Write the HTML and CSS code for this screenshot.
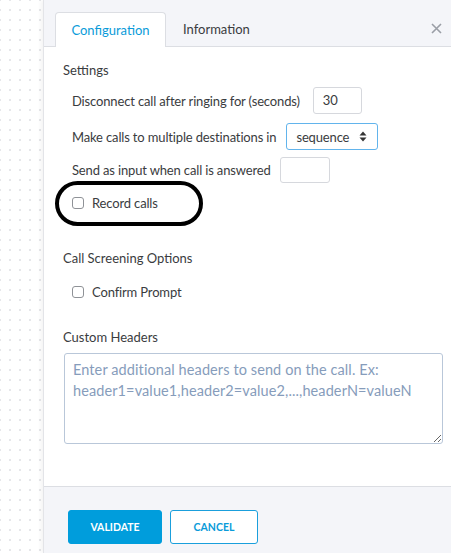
FILE: index.html
```html
<!DOCTYPE html>
<html lang="en">

<head>
    <meta charset="UTF-8">
    <meta name="viewport" content="width=device-width, initial-scale=1.0">
    <title>Call settings</title>
    <link rel="stylesheet" href="styles.css">
</head>

<body>
    <div class="page">
        <div class="gutter"></div>
        <div class="panel">
            <div class="tabs">
                <a class="tab active" href="javascript:;">Configuration</a>
                <a class="tab" href="javascript:;">Information</a>
                <a class="close" href="javascript:;">
                    <svg width="11" height="11" viewBox="0 0 11 11"><path d="M1 1L10 10M10 1L1 10" stroke="#9a9ea6" stroke-width="1.6"/></svg>
                </a>
            </div>

            <div class="content">
                <div class="heading first">Settings</div>
                <div class="row r1">
                    <span>Disconnect call after ringing for (seconds)</span>
                    <span class="field w49">30</span>
                </div>
                <div class="row r2">
                    <span>Make calls to multiple destinations in</span>
                    <span class="select">sequence
                        <svg width="8" height="11" viewBox="0 0 8 11"><path d="M4 0.5L7.5 4.5H0.5Z M4 10.5L7.5 6.5H0.5Z" fill="#333"/></svg>
                    </span>
                </div>
                <div class="row r3">
                    <span>Send as input when call is answered</span>
                    <span class="field w50"></span>
                </div>
                <div class="row check r4">
                    <span class="box"></span>
                    <span>Record calls</span>
                    <!-- 标注圈 -->
                    <span class="ring"></span>
                </div>

                <div class="heading h2">Call Screening Options</div>
                <div class="row check r5">
                    <span class="box"></span>
                    <span>Confirm Prompt</span>
                </div>

                <div class="heading h3">Custom Headers</div>
                <textarea class="headers" placeholder="Enter additional headers to send on the call. Ex: header1=value1,header2=value2,...,headerN=valueN"></textarea>
            </div>

            <div class="footer">
                <button class="btn primary">VALIDATE</button>
                <button class="btn ghost">CANCEL</button>
            </div>
        </div>
    </div>
</body>

</html>
```

FILE: styles.css
```css
* {
    margin: 0;
    padding: 0;
    box-sizing: border-box;
}

body {
    font-family: Lato, "Open Sans", sans-serif;
    font-size: 13px;
    color: #3a3c40;
    background-color: #ffffff;
    background-image: radial-gradient(#e6e7ea 1px, transparent 1.2px);
    background-size: 10px 10px;
    background-position: 5px 5px;
}

a {
    text-decoration: none;
}

.page {
    display: flex;
    height: 553px;
}

.gutter {
    width: 43px;
    flex-shrink: 0;
}

.panel {
    flex: 1;
    display: flex;
    flex-direction: column;
    background-color: #ffffff;
    border-left: 1px solid #e3e4e8;
    box-shadow: -2px 0 4px rgba(0, 0, 0, .05);
}

.tabs {
    position: relative;
    display: flex;
    align-items: flex-end;
    height: 47px;
    padding-left: 11px;
    background-color: #f4f5f9;
    border-bottom: 1px solid #dcdee3;
}

.tab {
    display: block;
    height: 35px;
    line-height: 34px;
    margin-bottom: -1px;
    font-size: 13px;
    color: #3a3c40;
}

.tab.active {
    width: 111px;
    text-align: center;
    color: #0a9bd9;
    background-color: #ffffff;
    border: 1px solid #dcdee3;
    border-bottom: none;
    border-radius: 4px 4px 0 0;
}

.tab + .tab {
    padding-left: 17px;
}

.close {
    margin-left: auto;
    margin-right: 9px;
    align-self: center;
    margin-top: 10px;
    display: flex;
}

.content {
    flex: 1;
    padding-left: 19px;
    padding-right: 7px;
}

.heading {
    height: 20px;
    line-height: 20px;
}

.heading.first {
    margin-top: 13px;
}

.heading.h2 {
    margin-top: 35px;
}

.heading.h3 {
    margin-top: 25px;
}

.row {
    display: flex;
    align-items: center;
    padding-left: 9px;
    gap: 9px;
    letter-spacing: -0.15px;
}

.r1 {
    margin-top: 7px;
}

.r2 {
    margin-top: 9px;
}

.r3 {
    margin-top: 7px;
}

.r4 {
    position: relative;
    margin-top: 10px;
    height: 20px;
}

.r5 {
    margin-top: 14px;
    height: 20px;
}

.field {
    display: block;
    height: 27px;
    line-height: 25px;
    padding-left: 9px;
    border: 1px solid #d6d8dd;
    border-radius: 3px;
}

.w49 {
    width: 49px;
    margin-left: 4px;
}

.w50 {
    width: 50px;
    height: 26px;
}

.select {
    display: flex;
    align-items: center;
    justify-content: space-between;
    width: 92px;
    height: 27px;
    padding: 0 10px 0 9px;
    margin-left: 1px;
    border: 1px solid #62b4ec;
    border-radius: 3px;
}

.check {
    gap: 8px;
}

.box {
    display: block;
    width: 12px;
    height: 12px;
    border: 1px solid #8f9297;
    border-radius: 3px;
}

.ring {
    position: absolute;
    left: -8px;
    top: -12px;
    width: 148px;
    height: 45px;
    border: 4px solid #000000;
    border-radius: 23px;
}

.headers {
    display: block;
    width: 379px;
    height: 91px;
    margin-top: 6px;
    margin-left: 1px;
    padding: 5px 8px;
    font-family: Lato, "Open Sans", sans-serif;
    font-size: 14.5px;
    line-height: 21px;
    letter-spacing: 0.1px;
    border: 1px solid #b9c7d9;
    border-radius: 3px;
    outline: none;
    resize: both;
}

.headers::placeholder {
    color: #869cbb;
}

.footer {
    display: flex;
    align-items: center;
    gap: 8px;
    height: 67px;
    padding-left: 24px;
    padding-top: 13px;
    background-color: #f4f5f9;
    border-top: 1px solid #dcdee3;
}

.btn {
    height: 34px;
    font-family: Lato, "Open Sans", sans-serif;
    font-size: 10.5px;
    font-weight: bold;
    border-radius: 3px;
    cursor: pointer;
}

.primary {
    width: 94px;
    color: #ffffff;
    background-color: #009ddc;
    border: 1px solid #009ddc;
}

.ghost {
    width: 88px;
    color: #0a9bd9;
    background-color: #ffffff;
    border: 1px solid #1a9fdc;
}
```
